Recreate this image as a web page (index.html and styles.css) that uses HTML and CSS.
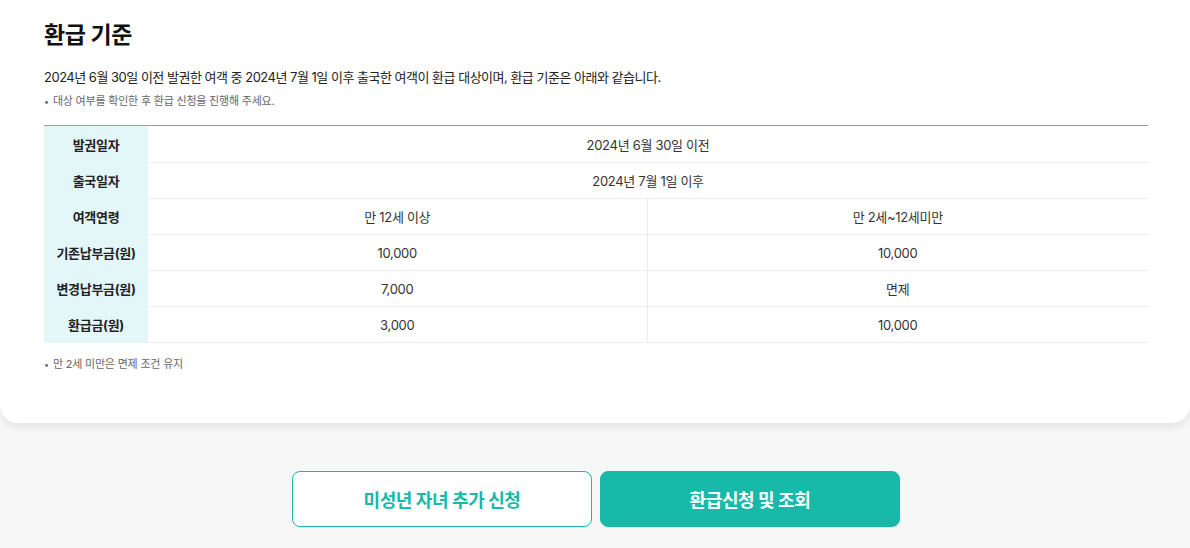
FILE: index.html
```html
<!DOCTYPE html>
<html lang="ko">
<head>
<meta charset="utf-8">
<title>환급 기준</title>
<link rel="stylesheet" href="styles.css">
</head>
<body>
<main class="page">
  <section class="card">
    <h2 class="title">환급 기준</h2>
    <p class="desc">2024년 6월 30일 이전 발권한 여객 중 2024년 7월 1일 이후 출국한 여객이 환급 대상이며, 환급 기준은 아래와 같습니다.</p>
    <p class="note">대상 여부를 확인한 후 환급 신청을 진행해 주세요.</p>
    <table class="tbl">
      <colgroup><col class="c-head"><col class="c-a"><col class="c-b"></colgroup>
      <tbody>
        <tr class="first"><th>발권일자</th><td colspan="2">2024년 6월 30일 이전</td></tr>
        <tr><th>출국일자</th><td colspan="2">2024년 7월 1일 이후</td></tr>
        <tr><th>여객연령</th><td>만 12세 이상</td><td>만 2세~12세미만</td></tr>
        <tr><th>기존납부금(원)</th><td>10,000</td><td>10,000</td></tr>
        <tr><th>변경납부금(원)</th><td>7,000</td><td>면제</td></tr>
        <tr><th>환급금(원)</th><td>3,000</td><td>10,000</td></tr>
      </tbody>
    </table>
    <p class="note foot">만 2세 미만은 면제 조건 유지</p>
  </section>
  <div class="actions">
    <button class="btn btn-line" type="button">미성년 자녀 추가 신청</button>
    <button class="btn btn-fill" type="button">환급신청 및 조회</button>
  </div>
</main>
</body>
</html>
```

FILE: styles.css
```css
* { box-sizing: border-box; }
html, body { margin: 0; padding: 0; }
body {
  background: #f7f7f7;
  font-family: "Inter", "Noto Sans CJK KR", sans-serif;
  color: #222;
  width: 1190px;
  height: 548px;
  overflow: hidden;
}
.page { display: flex; flex-direction: column; }
.card {
  background: #fff;
  border-radius: 0 0 18px 18px;
  box-shadow: 0 4px 10px rgba(0, 0, 0, 0.08);
  padding: 19px 42px 50px 44px;
}
.title {
  margin: 0;
  font-size: 23px;
  line-height: 32px;
  font-weight: 700;
  color: #111;
  letter-spacing: -0.4px;
}
.desc {
  margin: 16px 0 0;
  font-size: 13px;
  line-height: 20px;
  color: #222;
  letter-spacing: -0.5px;
}
.note {
  margin: 6px 0 0;
  font-size: 11px;
  line-height: 16px;
  color: #666;
  letter-spacing: -0.2px;
}
.note::before {
  content: "•";
  margin-right: 4px;
  font-size: 9px;
}
.tbl {
  margin-top: 15px;
  width: 1104px;
  border-collapse: collapse;
  border-top: 1px solid #9a9a9a;
  table-layout: fixed;
  font-size: 13px;
  letter-spacing: -0.3px;
}
.c-head { width: 104px; }
.c-a { width: 499px; }
.tbl th, .tbl td {
  height: 36px;
  padding: 0;
  text-align: center;
  vertical-align: middle;
}
.tbl .first th, .tbl .first td { height: 37px; padding-top: 1px; }
.tbl th {
  background: #e3f6f8;
  font-weight: 700;
  color: #222;
}
.tbl td {
  border-bottom: 1px solid #ececec;
  color: #333;
}
.tbl td + td { border-left: 1px solid #ececec; }
.foot { margin-top: 13px; }
.actions {
  display: flex;
  justify-content: center;
  gap: 8px;
  margin-top: 48px;
  padding-left: 2px;
}
.btn {
  width: 300px;
  height: 56px;
  border-radius: 8px;
  font-family: "Inter", "Noto Sans CJK KR", sans-serif;
  font-size: 18px;
  font-weight: 700;
  letter-spacing: -0.4px;
  cursor: pointer;
}
.btn-line {
  background: #fff;
  border: 1px solid #17b9a9;
  color: #17b9a9;
}
.btn-fill {
  background: #17b9a9;
  border: 1px solid #17b9a9;
  color: #fff;
}
```
